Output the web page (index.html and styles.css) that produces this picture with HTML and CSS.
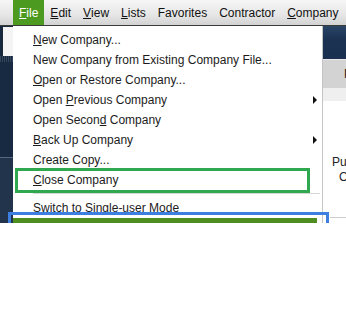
FILE: index.html
```html
<!DOCTYPE html>
<html>
<head>
<meta charset="utf-8">
<link rel="stylesheet" href="styles.css">
</head>
<body>
<div class="screen">
  <div class="menubar">
    <span class="mb-item active"><u>F</u>ile</span>
    <span class="mb-item"><u>E</u>dit</span>
    <span class="mb-item"><u>V</u>iew</span>
    <span class="mb-item"><u>L</u>ists</span>
    <span class="mb-item">Favorites</span>
    <span class="mb-item">Contractor</span>
    <span class="mb-item"><u>C</u>ompany</span>
  </div>
  <div class="workspace">
    <div class="sidebar">
      <div class="sb-white"></div>
      <div class="sb-dots"></div>
      <div class="sb-dark"></div>
      <div class="sb-line"></div>
      <div class="sb-lower"></div>
    </div>
    <div class="dropdown">
      <div class="item"><u>N</u>ew Company...</div>
      <div class="item">New Company from Existing Company File...</div>
      <div class="item"><u>O</u>pen or Restore Company...</div>
      <div class="item sub">Open <u>P</u>revious Company<span class="arrow"></span></div>
      <div class="item">Open Secon<u>d</u> Company</div>
      <div class="item sub"><u>B</u>ack Up Company<span class="arrow"></span></div>
      <div class="item">Create Copy...</div>
      <div class="item"><u>C</u>lose Company</div>
      <div class="sep"></div>
      <div class="item">Switch to Single-user Mode</div>
      <div class="mark-green"></div>
    </div>
    <div class="rightpane">
      <div class="rp-navy"></div>
      <div class="rp-tab">P</div>
      <div class="rp-light"></div>
      <div class="rp-content">
        <div class="rp-t1">Pu</div>
        <div class="rp-t2">O</div>
        <div class="rp-rule"></div>
      </div>
    </div>
    <div class="mark-blue"></div>
    <div class="mark-bar"></div>
  </div>
</div>
</body>
</html>
```
FILE: styles.css
```css
html, body {
  margin: 0;
  padding: 0;
  background: #ffffff;
}
.screen {
  width: 346px;
  height: 311px;
  overflow: hidden;
  font-family: "Liberation Sans", Arial, sans-serif;
  font-size: 12px;
}
.menubar {
  height: 25px;
  display: flex;
  align-items: stretch;
  padding-left: 13px;
  background: linear-gradient(#f6f6f6, #e6e6e6 60%, #d2d2d2);
  border-bottom: 1px solid #3a3a3a;
  white-space: nowrap;
}
.mb-item {
  display: flex;
  align-items: center;
  padding: 0 6px;
  color: #111;
}
.mb-item.active {
  background: #4c9a1f;
  color: #fff;
}
.workspace {
  position: relative;
  display: flex;
  height: 197px;
  overflow: hidden;
}
.sidebar {
  width: 13px;
  flex: none;
  display: flex;
  flex-direction: column;
  background: #17273d;
}
.sb-white {
  margin: 1px 0 0 3px;
  height: 29px;
  background: #f4f4f4;
}
.sb-dots {
  height: 6px;
  background: repeating-linear-gradient(90deg, #33465e 0 1px, #17273d 1px 2px);
}
.sb-dark {
  height: 95px;
  background: #182a42;
}
.sb-line {
  height: 1px;
  background: #56667c;
}
.sb-lower {
  flex: 1;
  background: #22344c;
}
.dropdown {
  position: relative;
  width: 309px;
  flex: none;
  padding-top: 4px;
  background: #fff;
  border-right: 1px solid #c4c4c4;
  color: #1c1c1c;
  white-space: nowrap;
}
.item {
  position: relative;
  height: 20px;
  line-height: 20px;
  padding-left: 20px;
}
.arrow {
  position: absolute;
  left: 300px;
  top: 6px;
  width: 0;
  height: 0;
  border-top: 4px solid transparent;
  border-bottom: 4px solid transparent;
  border-left: 4px solid #111;
}
.sep {
  height: 1px;
  margin: 3px 2px 4px 20px;
  background: #d6d6d6;
}
.mark-green {
  position: absolute;
  left: 2px;
  top: 142px;
  width: 289px;
  height: 19px;
  border: 3px solid #2fa84f;
}
.rightpane {
  flex: 1;
  display: flex;
  flex-direction: column;
  overflow: hidden;
}
.rp-navy {
  height: 33px;
  background: linear-gradient(#2a4466, #1b3252 40%, #1a3050);
}
.rp-tab {
  height: 28px;
  border-top: 1px solid #e8e8e8;
  background: #d3d3d3;
  padding-left: 21px;
  line-height: 28px;
  color: #222;
}
.rp-light {
  height: 13px;
  background: #efefef;
}
.rp-content {
  flex: 1;
  background: #fff;
  color: #222;
  padding-top: 54px;
}
.rp-t1 {
  padding-left: 9px;
  line-height: 15px;
}
.rp-t2 {
  padding-left: 16px;
  line-height: 15px;
}
.rp-rule {
  margin: 32px 0 0 7px;
  height: 1px;
  background: #cccccc;
}
.mark-blue {
  position: absolute;
  left: 8px;
  top: 186px;
  width: 315px;
  height: 40px;
  border: 3px solid #3d7fe0;
}
.mark-bar {
  position: absolute;
  left: 13px;
  top: 192px;
  width: 304px;
  height: 10px;
  background: #4e8d1f;
}
```
